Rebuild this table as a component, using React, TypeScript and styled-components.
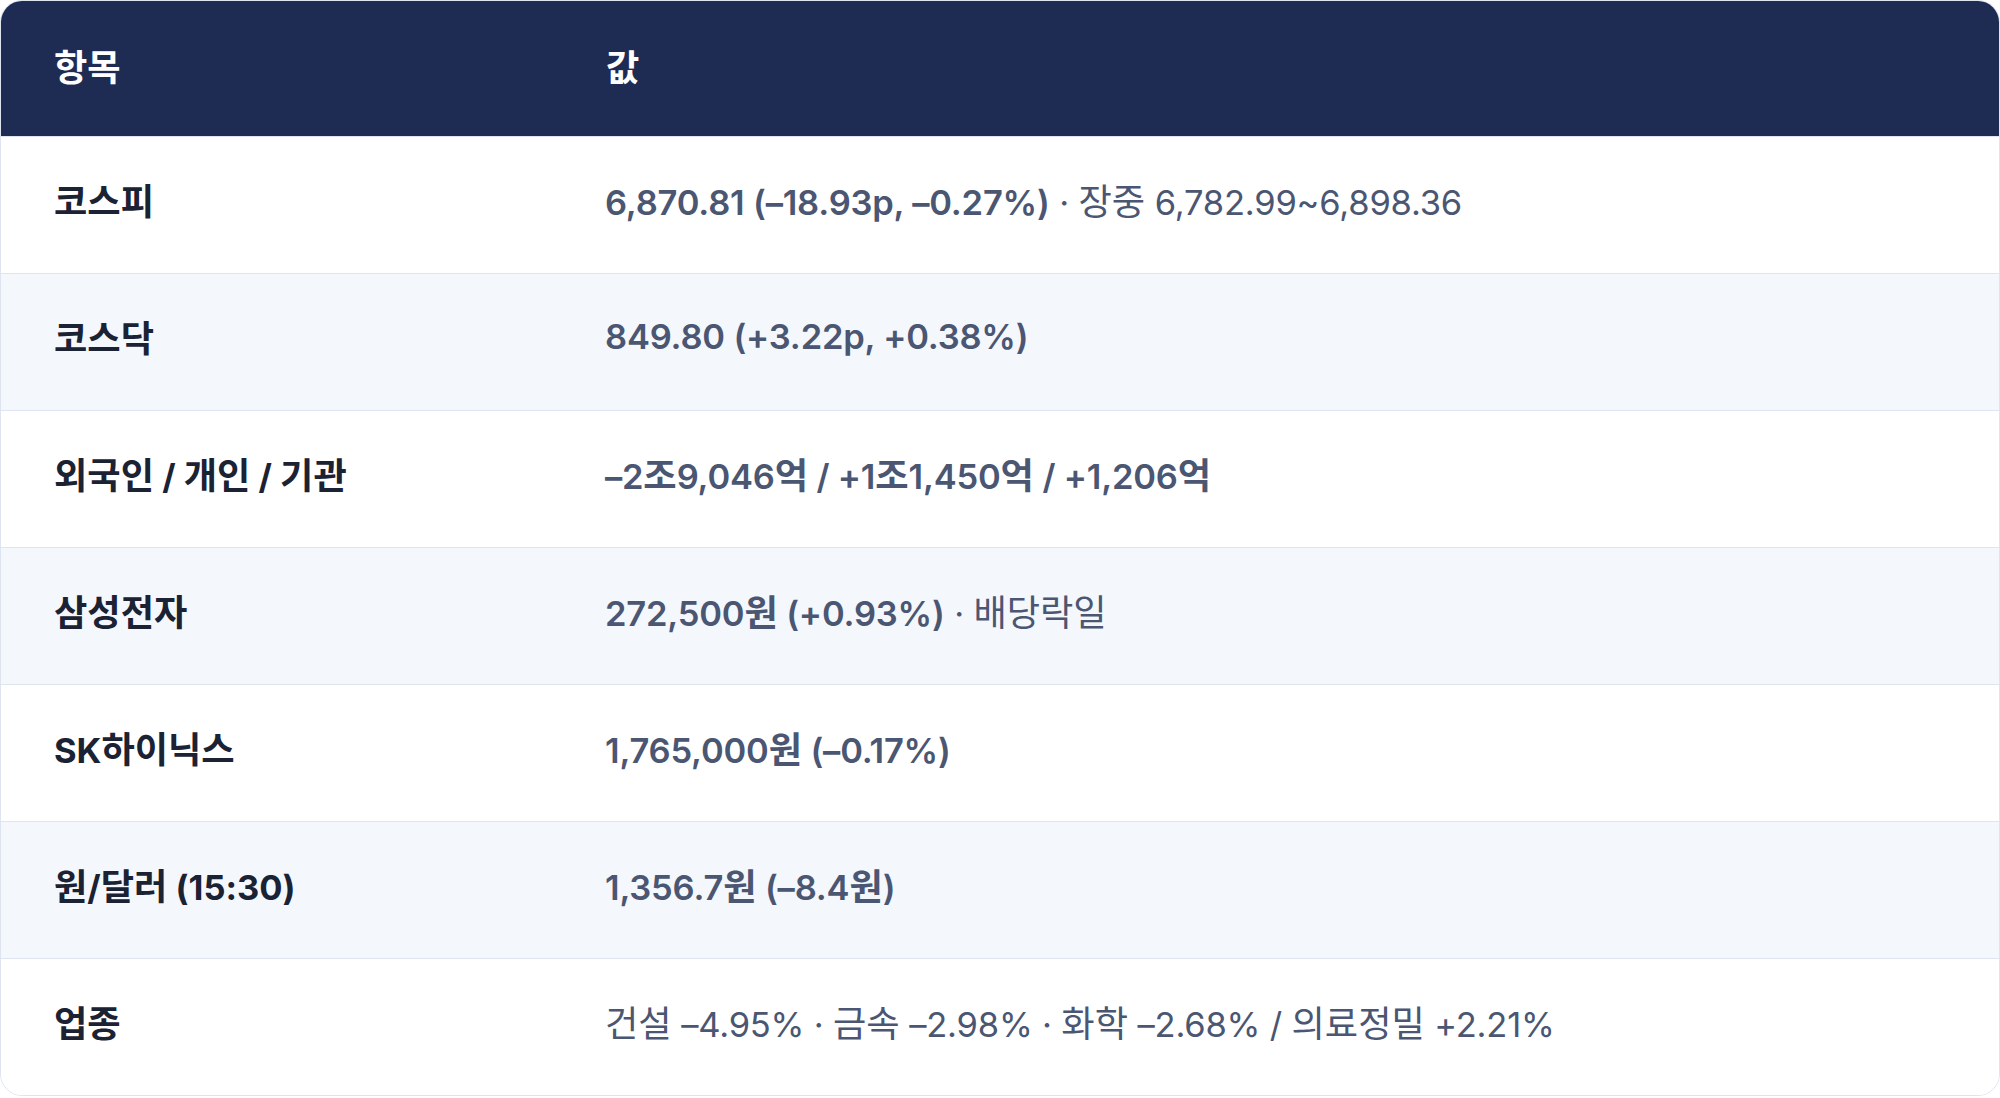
import React from "react";
import styled, { createGlobalStyle } from "styled-components";

const Global = createGlobalStyle`
  html, body { margin: 0; padding: 0; background: #ffffff; }
  body { font-family: Inter, "Noto Sans CJK KR", sans-serif; }
`;

const Card = styled.div`
  width: 2000px;
  box-sizing: border-box;
  border: 1px solid #dfe5f0;
  border-radius: 22px;
  overflow: hidden;
  background: #ffffff;
`;

const Table = styled.table`
  width: 100%;
  border-collapse: collapse;
  table-layout: fixed;
  font-family: Inter, "Noto Sans CJK KR", sans-serif;
`;

const HeadRow = styled.tr`
  background: #1e2b52;
  height: 135px;
`;

const HeadCell = styled.th<{ $w?: number }>`
  width: ${(p) => (p.$w ? `${p.$w}px` : "auto")};
  box-sizing: border-box;
  padding: 0 0 7px 53px;
  text-align: left;
  color: #ffffff;
  font-size: 34.5px;
  font-weight: 700;
  vertical-align: middle;
`;

const Row = styled.tr<{ $alt: boolean }>`
  height: 137px;
  background: ${(p) => (p.$alt ? "#f4f7fc" : "#ffffff")};
  border-top: 1px solid #dfe5f0;
`;

const Label = styled.td`
  box-sizing: border-box;
  padding: 0 0 11px 53px;
  color: #1a2233;
  font-size: 34.5px;
  font-weight: 700;
  vertical-align: middle;
`;

const Value = styled.td`
  box-sizing: border-box;
  padding: 0 0 11px 52px;
  color: #4a5672;
  font-size: 34.5px;
  letter-spacing: -0.2px;
  vertical-align: middle;
`;

const Strong = styled.span`
  font-weight: 600;
`;

const Soft = styled.span`
  font-weight: 400;
`;

const Hangul = styled.span`
  font-size: 1.05em;
  letter-spacing: 0;
`;

const KR = ({ text }: { text: string }) => {
  const parts = text.split(/([\uAC00-\uD7A3]+)/);
  return (
    <>
      {parts.map((p, i) =>
        /[\uAC00-\uD7A3]/.test(p) ? <Hangul key={i}>{p}</Hangul> : <React.Fragment key={i}>{p}</React.Fragment>
      )}
    </>
  );
};

type Item = { label: string; strong?: string; soft?: string };

const rows: Item[] = [
  { label: "코스피", strong: "6,870.81 (–18.93p, –0.27%)", soft: " · 장중 6,782.99~6,898.36" },
  { label: "코스닥", strong: "849.80 (+3.22p, +0.38%)" },
  { label: "외국인 / 개인 / 기관", strong: "–2조9,046억 / +1조1,450억 / +1,206억" },
  { label: "삼성전자", strong: "272,500원 (+0.93%)", soft: " · 배당락일" },
  { label: "SK하이닉스", strong: "1,765,000원 (–0.17%)" },
  { label: "원/달러 (15:30)", strong: "1,356.7원 (–8.4원)" },
  { label: "업종", soft: "건설 –4.95% · 금속 –2.98% · 화학 –2.68% / 의료정밀 +2.21%" },
];

export default function App() {
  return (
    <>
      <Global />
      <Card>
        <Table>
          <thead>
            <HeadRow>
              <HeadCell $w={552}>
                <KR text="항목" />
              </HeadCell>
              <HeadCell>
                <KR text="값" />
              </HeadCell>
            </HeadRow>
          </thead>
          <tbody>
            {rows.map((r, i) => (
              <Row key={r.label} $alt={i % 2 === 1}>
                <Label>
                  <KR text={r.label} />
                </Label>
                <Value>
                  {r.strong && (
                    <Strong>
                      <KR text={r.strong} />
                    </Strong>
                  )}
                  {r.soft && (
                    <Soft>
                      <KR text={r.soft} />
                    </Soft>
                  )}
                </Value>
              </Row>
            ))}
          </tbody>
        </Table>
      </Card>
    </>
  );
}
